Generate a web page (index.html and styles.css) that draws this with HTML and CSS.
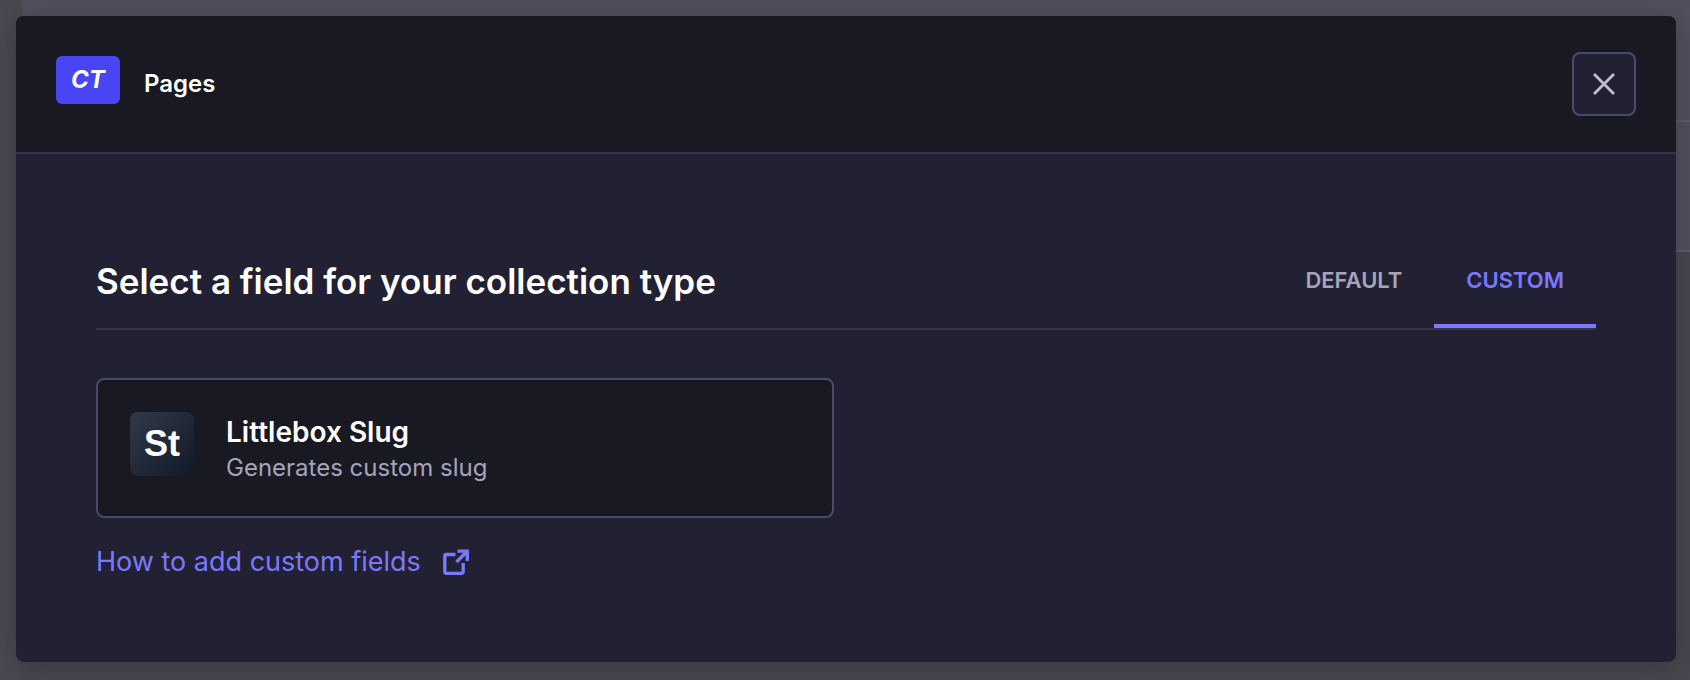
FILE: index.html
```html
<!DOCTYPE html>
<html lang="en">
<head>
<meta charset="utf-8">
<title>Pages</title>
<link rel="stylesheet" href="styles.css">
</head>
<body>
<div class="screen">
  <div class="backdrop" aria-hidden="true">
    <div class="backdrop-side"></div>
    <div class="backdrop-main">
      <div class="backdrop-bar"></div>
      <div class="backdrop-head"></div>
    </div>
  </div>
  <section class="modal" role="dialog" aria-modal="true" aria-labelledby="modal-title">
    <header class="modal-header">
      <div class="crumb">
        <span class="badge">CT</span>
        <span class="crumb-name">Pages</span>
      </div>
      <button class="close" type="button" aria-label="Close">
        <svg viewBox="0 0 22 22" width="22" height="22" fill="none" stroke="currentColor" stroke-width="2.8"><path d="M1 1l20 20M21 1L1 21"/></svg>
      </button>
    </header>
    <div class="modal-body">
      <div class="title-row">
        <h1 class="title" id="modal-title">Select a field for your collection type</h1>
        <div class="tabs" role="tablist">
          <button class="tab" type="button" role="tab" aria-selected="false">DEFAULT</button>
          <button class="tab tab-active" type="button" role="tab" aria-selected="true">CUSTOM</button>
        </div>
      </div>
      <div class="fields">
        <button class="card" type="button">
          <span class="card-icon" aria-hidden="true">St</span>
          <span class="card-text">
            <span class="card-name">Littlebox Slug</span>
            <span class="card-desc">Generates custom slug</span>
          </span>
        </button>
      </div>
      <a class="help" href="#">
        <span>How to add custom fields</span>
        <svg viewBox="0 0 26 26" width="26" height="26" fill="none" stroke="currentColor" stroke-width="3.3"><path d="M12.5 5.5H3.3A1.5 1.5 0 0 0 1.8 7v15.800a1.500 1.500 0 0 0 1.500 1.500h15.400a1.500 1.500 0 0 0 1.500-1.500V14"/><path d="M14.500 2.200H24.300V12M24 2.500L13.500 13"/></svg>
      </a>
    </div>
  </section>
</div>
</body>
</html>
```
FILE: styles.css
```css
* {
  box-sizing: border-box;
}

body {
  margin: 0;
  background: #48474f;
  font-family: Inter, "Liberation Sans", sans-serif;
  color: #ffffff;
}

button {
  font: inherit;
  color: inherit;
  cursor: pointer;
}

.screen {
  display: grid;
  min-height: 100vh;
  overflow: hidden;
}

.backdrop,
.modal {
  grid-area: 1 / 1;
}

.backdrop {
  display: flex;
}

.backdrop-side {
  width: 22px;
  background: #4a4952;
}

.backdrop-main {
  flex: 1;
}

.backdrop-bar,
.backdrop-head {
  background: #51505d;
  border-bottom: 2px solid #5d5c6c;
}

.backdrop-bar {
  height: 122px;
}

.backdrop-head {
  height: 130px;
}

.modal {
  position: relative;
  align-self: start;
  margin: 16px 14px 18px 16px;
  border-radius: 8px;
  background: #222133;
  box-shadow: 0 4px 30px rgba(20, 20, 28, 0.3);
  overflow: hidden;
}

.modal-header {
  display: flex;
  align-items: center;
  justify-content: space-between;
  padding: 36px 40px;
  background: #191924;
  border-bottom: 2px solid #32324d;
}

.crumb {
  display: flex;
  align-items: center;
  gap: 24px;
}

.badge {
  width: 64px;
  margin-bottom: 8px;
  border-radius: 6px;
  background: #4945f5;
  font-size: 24px;
  font-style: italic;
  font-weight: 700;
  line-height: 48px;
  text-align: center;
}

.crumb-name {
  font-size: 24px;
  font-weight: 600;
  line-height: 32px;
}

.close {
  display: grid;
  place-items: center;
  width: 64px;
  height: 64px;
  padding: 0;
  border: 2px solid #4a4a6a;
  border-radius: 8px;
  background: #222133;
  color: #c0c0cf;
}

.modal-body {
  padding: 80px 80px 84px;
}

.title-row {
  display: flex;
  align-items: center;
  justify-content: space-between;
  border-bottom: 2px solid #32324d;
}

.title {
  margin: 0;
  font-size: 35px;
  font-weight: 600;
  line-height: 44px;
}

.tabs {
  display: flex;
}

.tab {
  padding: 32px 32px 30px;
  border: 0;
  border-bottom: 4px solid transparent;
  background: none;
  color: #a5a5ba;
  font-size: 22px;
  font-weight: 600;
  line-height: 28px;
}

.tab-active {
  border-color: #7b79ff;
  color: #7b79ff;
}

.fields {
  display: grid;
  grid-template-columns: 1fr 1fr;
  gap: 24px;
  padding: 48px 0 28px;
}

.card {
  display: flex;
  align-items: flex-start;
  gap: 32px;
  padding: 32px 32px 28px;
  border: 2px solid #4a4a6a;
  border-radius: 8px;
  background: #191924;
  text-align: left;
}

.card-icon {
  width: 64px;
  border-radius: 8px;
  background: linear-gradient(135deg, #323947, #111827);
  font-family: "Liberation Sans", Arial, sans-serif;
  font-size: 36px;
  font-weight: 700;
  line-height: 64px;
  text-align: center;
}

.card-text {
  display: grid;
  padding: 2px 0;
}

.card-name {
  font-size: 28px;
  font-weight: 600;
  line-height: 36px;
}

.card-desc {
  color: #a5a5ba;
  font-size: 24px;
  line-height: 36px;
}

.help {
  display: inline-flex;
  align-items: center;
  gap: 22px;
  color: #7b79ff;
  font-size: 27px;
  line-height: 32px;
  text-decoration: none;
  vertical-align: top;
}
```
